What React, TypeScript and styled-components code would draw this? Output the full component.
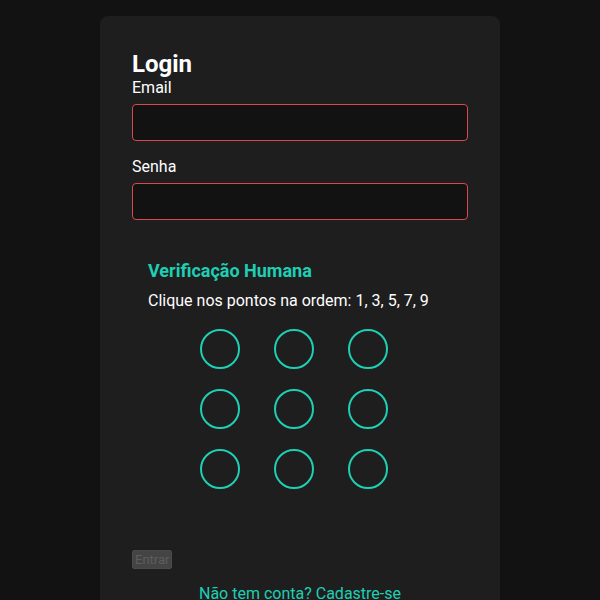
import styled, { createGlobalStyle } from 'styled-components';

const GlobalStyle = createGlobalStyle`
  body {
    margin: 0;
    background: #121212;
    font-family: Roboto, "Liberation Sans", sans-serif;
    color: #ffffff;
  }
`;

const Page = styled.div`
  display: flex;
  justify-content: center;
  padding-top: 16px;
  min-height: 100vh;
`;

const Card = styled.div`
  width: 400px;
  box-sizing: border-box;
  background: #1e1e1e;
  border-radius: 8px;
  padding: 34px 32px 32px;
`;

const Title = styled.h2`
  margin: 0;
  font-size: 24px;
  font-weight: 700;
  line-height: 28px;
`;

const Field = styled.div`
  margin-bottom: 16px;
`;

const Label = styled.label`
  display: block;
  font-size: 16px;
  line-height: 19px;
  margin-bottom: 7px;
`;

const TextInput = styled.input`
  display: block;
  width: 100%;
  box-sizing: border-box;
  height: 37px;
  background: #121212;
  border: 1.5px solid #d9484f;
  border-radius: 4px;
  color: #fff;
  font-family: inherit;
  font-size: 16px;
  padding: 0 10px;

  &:focus {
    outline: none;
  }
`;

const Captcha = styled.div`
  margin-top: 24px;
  padding: 16px;
`;

const CaptchaTitle = styled.h3`
  margin: 0 0 10px;
  font-size: 18px;
  font-weight: 700;
  line-height: 21px;
  color: #1fcfb4;
`;

const Instruction = styled.p`
  margin: 0 0 19px;
  font-size: 16px;
  line-height: 19px;
`;

const DotGrid = styled.div`
  display: grid;
  grid-template-columns: repeat(3, 40px);
  column-gap: 34px;
  row-gap: 20px;
  padding-left: 52px;
`;

const Dot = styled.button`
  width: 40px;
  height: 40px;
  box-sizing: border-box;
  border-radius: 50%;
  border: 2.5px solid #1fcfb4;
  background: transparent;
  padding: 0;
  cursor: pointer;
`;

const SubmitButton = styled.button`
  display: block;
  margin-top: 45px;
  height: 19px;
  padding: 0 2px;
  background: #444444;
  color: #5e5e5e;
  border: 1px solid #4a4a4a;
  border-radius: 2px;
  font-family: Roboto, "Liberation Sans", sans-serif;
  font-size: 13px;
  cursor: not-allowed;
`;

const SignupLink = styled.a`
  display: block;
  margin-top: 15px;
  text-align: center;
  font-size: 16px;
  line-height: 19px;
  color: #1fcfb4;
  text-decoration: none;
`;

export default function App() {
  return (
    <>
      <GlobalStyle />
      <Page>
        <Card>
          <Title>Login</Title>
          <Field>
            <Label>Email</Label>
            <TextInput type="email" />
          </Field>
          <Field>
            <Label>Senha</Label>
            <TextInput type="password" />
          </Field>
          <Captcha>
            <CaptchaTitle>Verificação Humana</CaptchaTitle>
            <Instruction>Clique nos pontos na ordem: 1, 3, 5, 7, 9</Instruction>
            <DotGrid>
              {Array.from({ length: 9 }, (_, i) => (
                <Dot key={i} aria-label={`Ponto ${i + 1}`} />
              ))}
            </DotGrid>
          </Captcha>
          <SubmitButton disabled>Entrar</SubmitButton>
          <SignupLink href="#">Não tem conta? Cadastre-se</SignupLink>
        </Card>
      </Page>
    </>
  );
}
